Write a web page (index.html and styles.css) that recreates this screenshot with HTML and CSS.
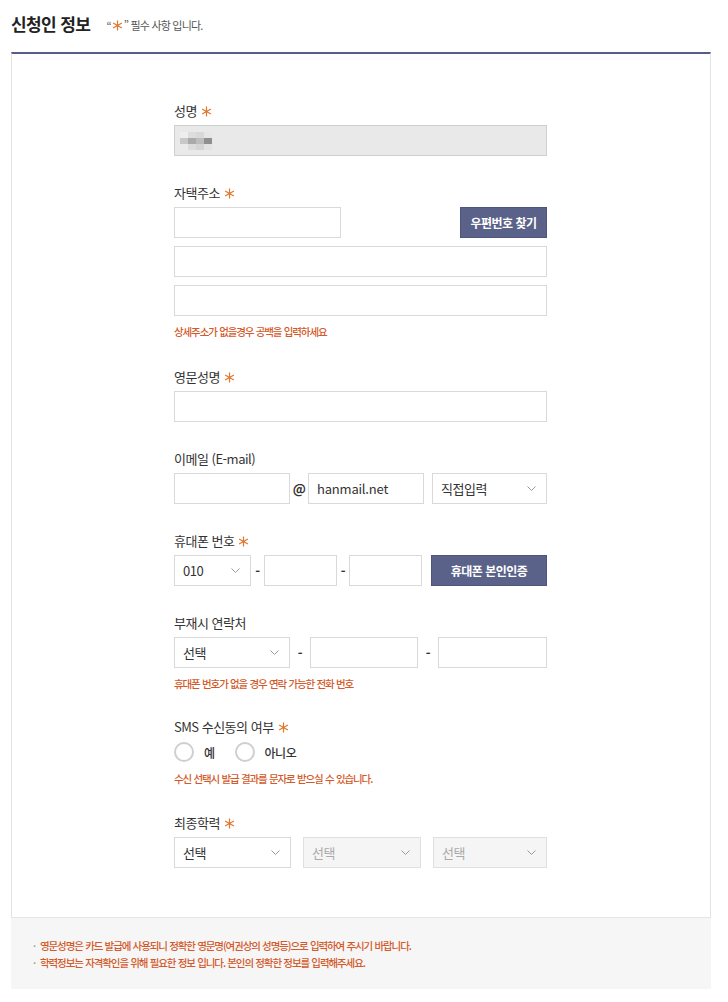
FILE: index.html
```html
<!DOCTYPE html>
<html lang="ko">
<head>
<meta charset="utf-8">
<title>신청인 정보</title>
<link rel="stylesheet" href="styles.css">
</head>
<body>
<div class="page">
  <div class="head">
    <h2 class="title">신청인 정보</h2>
    <span class="note">“<svg class="star star-note" viewBox="0 0 12 12"><path d="M6 0.5V11.5M1.2 3.2L10.8 8.8M10.8 3.2L1.2 8.8"/></svg>” 필수 사항 입니다.</span>
  </div>

  <div class="panel">
    <div class="form">
      <div class="field">
        <div class="label">성명 <svg class="star" viewBox="0 0 12 12"><path d="M6 0.5V11.5M1.2 3.2L10.8 8.8M10.8 3.2L1.2 8.8"/></svg></div>
        <div class="input readonly">
          <svg class="mosaic" viewBox="0 0 32 18" width="32" height="18">
            <rect x="0" y="0" width="8" height="6" fill="#eeeeee"/>
            <rect x="8" y="0" width="8" height="6" fill="#dddddd"/>
            <rect x="16" y="0" width="8" height="6" fill="#d8d8d8"/>
            <rect x="24" y="0" width="8" height="6" fill="#e6e6e6"/>
            <rect x="0" y="6" width="8" height="6" fill="#c8c8c8"/>
            <rect x="8" y="6" width="8" height="6" fill="#aaaaaa"/>
            <rect x="16" y="6" width="8" height="6" fill="#bdbdbd"/>
            <rect x="24" y="6" width="8" height="6" fill="#8f8f8f"/>
            <rect x="0" y="12" width="8" height="6" fill="#eaeaea"/>
            <rect x="8" y="12" width="8" height="6" fill="#dcdcdc"/>
            <rect x="16" y="12" width="8" height="6" fill="#d4d4d4"/>
            <rect x="24" y="12" width="8" height="6" fill="#e2e2e2"/>
          </svg>
        </div>
      </div>

      <div class="field">
        <div class="label">자택주소 <svg class="star" viewBox="0 0 12 12"><path d="M6 0.5V11.5M1.2 3.2L10.8 8.8M10.8 3.2L1.2 8.8"/></svg></div>
        <div class="row between">
          <div class="input w-zip"></div>
          <div class="btn w-zipbtn">우편번호 찾기</div>
        </div>
        <div class="input stack"></div>
        <div class="input stack"></div>
        <p class="help">상세주소가 없을경우 공백을 입력하세요</p>
      </div>

      <div class="field">
        <div class="label">영문성명 <svg class="star" viewBox="0 0 12 12"><path d="M6 0.5V11.5M1.2 3.2L10.8 8.8M10.8 3.2L1.2 8.8"/></svg></div>
        <div class="input"></div>
      </div>

      <div class="field">
        <div class="label">이메일 (E-mail)</div>
        <div class="row">
          <div class="input w-mail"></div>
          <span class="at">@</span>
          <div class="input w-mail val">hanmail.net</div>
          <div class="select grow ml8"><span>직접입력</span><svg class="chev" viewBox="0 0 9 5"><path d="M0.5 0.5L4.5 4.5L8.5 0.5"/></svg></div>
        </div>
      </div>

      <div class="field">
        <div class="label">휴대폰 번호 <svg class="star" viewBox="0 0 12 12"><path d="M6 0.5V11.5M1.2 3.2L10.8 8.8M10.8 3.2L1.2 8.8"/></svg></div>
        <div class="row">
          <div class="select w-tel"><span>010</span><svg class="chev" viewBox="0 0 9 5"><path d="M0.5 0.5L4.5 4.5L8.5 0.5"/></svg></div>
          <span class="dash d13">-</span>
          <div class="input w-telnum"></div>
          <span class="dash d12">-</span>
          <div class="input w-telnum"></div>
          <div class="btn grow ml9">휴대폰 본인인증</div>
        </div>
      </div>

      <div class="field has-help">
        <div class="label">부재시 연락처</div>
        <div class="row">
          <div class="select w-alt"><span>선택</span><svg class="chev" viewBox="0 0 9 5"><path d="M0.5 0.5L4.5 4.5L8.5 0.5"/></svg></div>
          <span class="dash d20">-</span>
          <div class="input w-altnum"></div>
          <span class="dash d20">-</span>
          <div class="input grow"></div>
        </div>
        <p class="help">휴대폰 번호가 없을 경우 연락 가능한 전화 번호</p>
      </div>

      <div class="field has-help sms">
        <div class="label">SMS 수신동의 여부 <svg class="star" viewBox="0 0 12 12"><path d="M6 0.5V11.5M1.2 3.2L10.8 8.8M10.8 3.2L1.2 8.8"/></svg></div>
        <div class="radios">
          <label class="radio"><span class="circle"></span><span class="rtext">예</span></label>
          <label class="radio"><span class="circle"></span><span class="rtext">아니오</span></label>
        </div>
        <p class="help">수신 선택시 발급 결과를 문자로 받으실 수 있습니다.</p>
      </div>

      <div class="field last">
        <div class="label">최종학력 <svg class="star" viewBox="0 0 12 12"><path d="M6 0.5V11.5M1.2 3.2L10.8 8.8M10.8 3.2L1.2 8.8"/></svg></div>
        <div class="grid3">
          <div class="select"><span>선택</span><svg class="chev" viewBox="0 0 9 5"><path d="M0.5 0.5L4.5 4.5L8.5 0.5"/></svg></div>
          <div class="select disabled"><span>선택</span><svg class="chev" viewBox="0 0 9 5"><path d="M0.5 0.5L4.5 4.5L8.5 0.5"/></svg></div>
          <div class="select disabled"><span>선택</span><svg class="chev" viewBox="0 0 9 5"><path d="M0.5 0.5L4.5 4.5L8.5 0.5"/></svg></div>
        </div>
      </div>
    </div>
  </div>

  <ul class="notes">
    <li>영문성명은 카드 발급에 사용되니 정확한 영문명(여권상의 성명등)으로 입력하여 주시기 바랍니다.</li>
    <li>학력정보는 자격확인을 위해 필요한 정보 입니다. 본인의 정확한 정보를 입력해주세요.</li>
  </ul>
</div>
</body>
</html>
```

FILE: styles.css
```css
* { box-sizing: border-box; }
html, body { margin: 0; padding: 0; background: #fff; }
body {
  font-family: "Noto Sans CJK KR", "Noto Sans", "Liberation Sans", sans-serif;
  color: #333;
  letter-spacing: -0.5px;
}
.page { width: 728px; padding: 0 17px 0 11px; }

.head {
  height: 52px;
  display: flex;
  align-items: center;
  gap: 16px;
  padding-bottom: 4px;
}
.title {
  margin: 0;
  font-size: 17px;
  font-weight: 700;
  color: #222;
  letter-spacing: -0.6px;
  line-height: 24px;
}
.note {
  display: flex;
  align-items: center;
  font-size: 11px;
  color: #555;
  letter-spacing: -0.8px;
  margin-top: 2px;
}
.star-note { width: 10px; height: 10px; margin: 0 1px; }

.panel {
  border-top: 2px solid #565d88;
  border-left: 1px solid #e3e3e3;
  border-right: 1px solid #e3e3e3;
  padding: 48px 0 49px;
}
.form { width: 373px; margin: 0 0 0 162px; }

.field { margin-bottom: 28px; }
.field.has-help { margin-bottom: 26px; }
.field.sms { margin-bottom: 27px; }
.field.last { margin-bottom: 0; }

.label {
  display: flex;
  align-items: center;
  gap: 4px;
  font-size: 13px;
  line-height: 18px;
  height: 18px;
  margin-bottom: 5px;
  color: #333;
}
.star {
  width: 11px;
  height: 11px;
  fill: none;
  stroke: #e0782f;
  stroke-width: 1.3;
}

.input, .select, .btn {
  height: 31px;
  border: 1px solid #d9d9d9;
  background: #fff;
  font-size: 13px;
}
.input.readonly {
  background: #e9e9e9;
  border-color: #cfcfcf;
  display: flex;
  align-items: center;
  padding-left: 5px;
}
.mosaic { display: block; }
.input.stack { margin-top: 8px; }
.input.val {
  display: flex;
  align-items: center;
  padding-left: 8px;
  color: #333;
  letter-spacing: -0.2px;
}

.row { display: flex; align-items: center; }
.row.between { justify-content: space-between; }
.grow { flex: 1; }
.ml8 { margin-left: 8px; }
.ml9 { margin-left: 9px; }

.w-zip { width: 167px; }
.w-zipbtn { width: 87px; }
.w-mail { width: 116px; }
.w-tel { width: 77px; }
.w-telnum { width: 73px; }
.w-alt { width: 116px; }
.w-altnum { width: 108px; }

.at {
  width: 18px;
  text-align: center;
  font-size: 13px;
  font-weight: 700;
  color: #333;
}
.dash {
  text-align: center;
  font-size: 13px;
  color: #333;
  font-weight: 700;
}
.d12 { width: 12px; }
.d13 { width: 13px; }
.d20 { width: 20px; }

.btn {
  background: #5b6289;
  border-color: #4e557c;
  color: #fff;
  font-size: 12px;
  font-weight: 700;
  display: flex;
  align-items: center;
  justify-content: center;
  letter-spacing: -0.5px;
}

.select {
  display: flex;
  align-items: center;
  justify-content: space-between;
  padding: 0 10px 0 8px;
  color: #333;
}
.select.disabled {
  background: #f5f5f5;
  border-color: #e0e0e0;
  color: #aaa;
}
.chev {
  width: 9px;
  height: 5px;
  fill: none;
  stroke: #999;
  stroke-width: 1;
}

.help {
  margin: 8px 0 0;
  font-size: 10.5px;
  line-height: 16px;
  font-weight: 500;
  color: #d4592a;
  letter-spacing: -1.1px;
  word-spacing: 0.5px;
}

.radios {
  display: flex;
  align-items: center;
  gap: 20px;
  height: 22px;
}
.radio { display: flex; align-items: center; gap: 10px; }
.circle {
  width: 20px;
  height: 20px;
  border: 2px solid #cfcfcf;
  border-radius: 50%;
  background: #fff;
}
.rtext { font-size: 12px; font-weight: 500; color: #333; }

.grid3 {
  display: grid;
  grid-template-columns: 117px 118px 1fr;
  gap: 12px;
}

.notes {
  list-style: none;
  margin: 0;
  padding: 19px 22px 22px;
  background: #f6f6f6;
  border-top: 1px solid #e5e5e5;
  height: 72px;
}
.notes li {
  position: relative;
  padding-left: 7px;
  font-size: 10.5px;
  line-height: 17px;
  font-weight: 500;
  color: #d4592a;
  letter-spacing: -1.1px;
  word-spacing: 0.5px;
}
.notes li::before {
  content: "·";
  position: absolute;
  left: 0;
  color: #999;
}
```
